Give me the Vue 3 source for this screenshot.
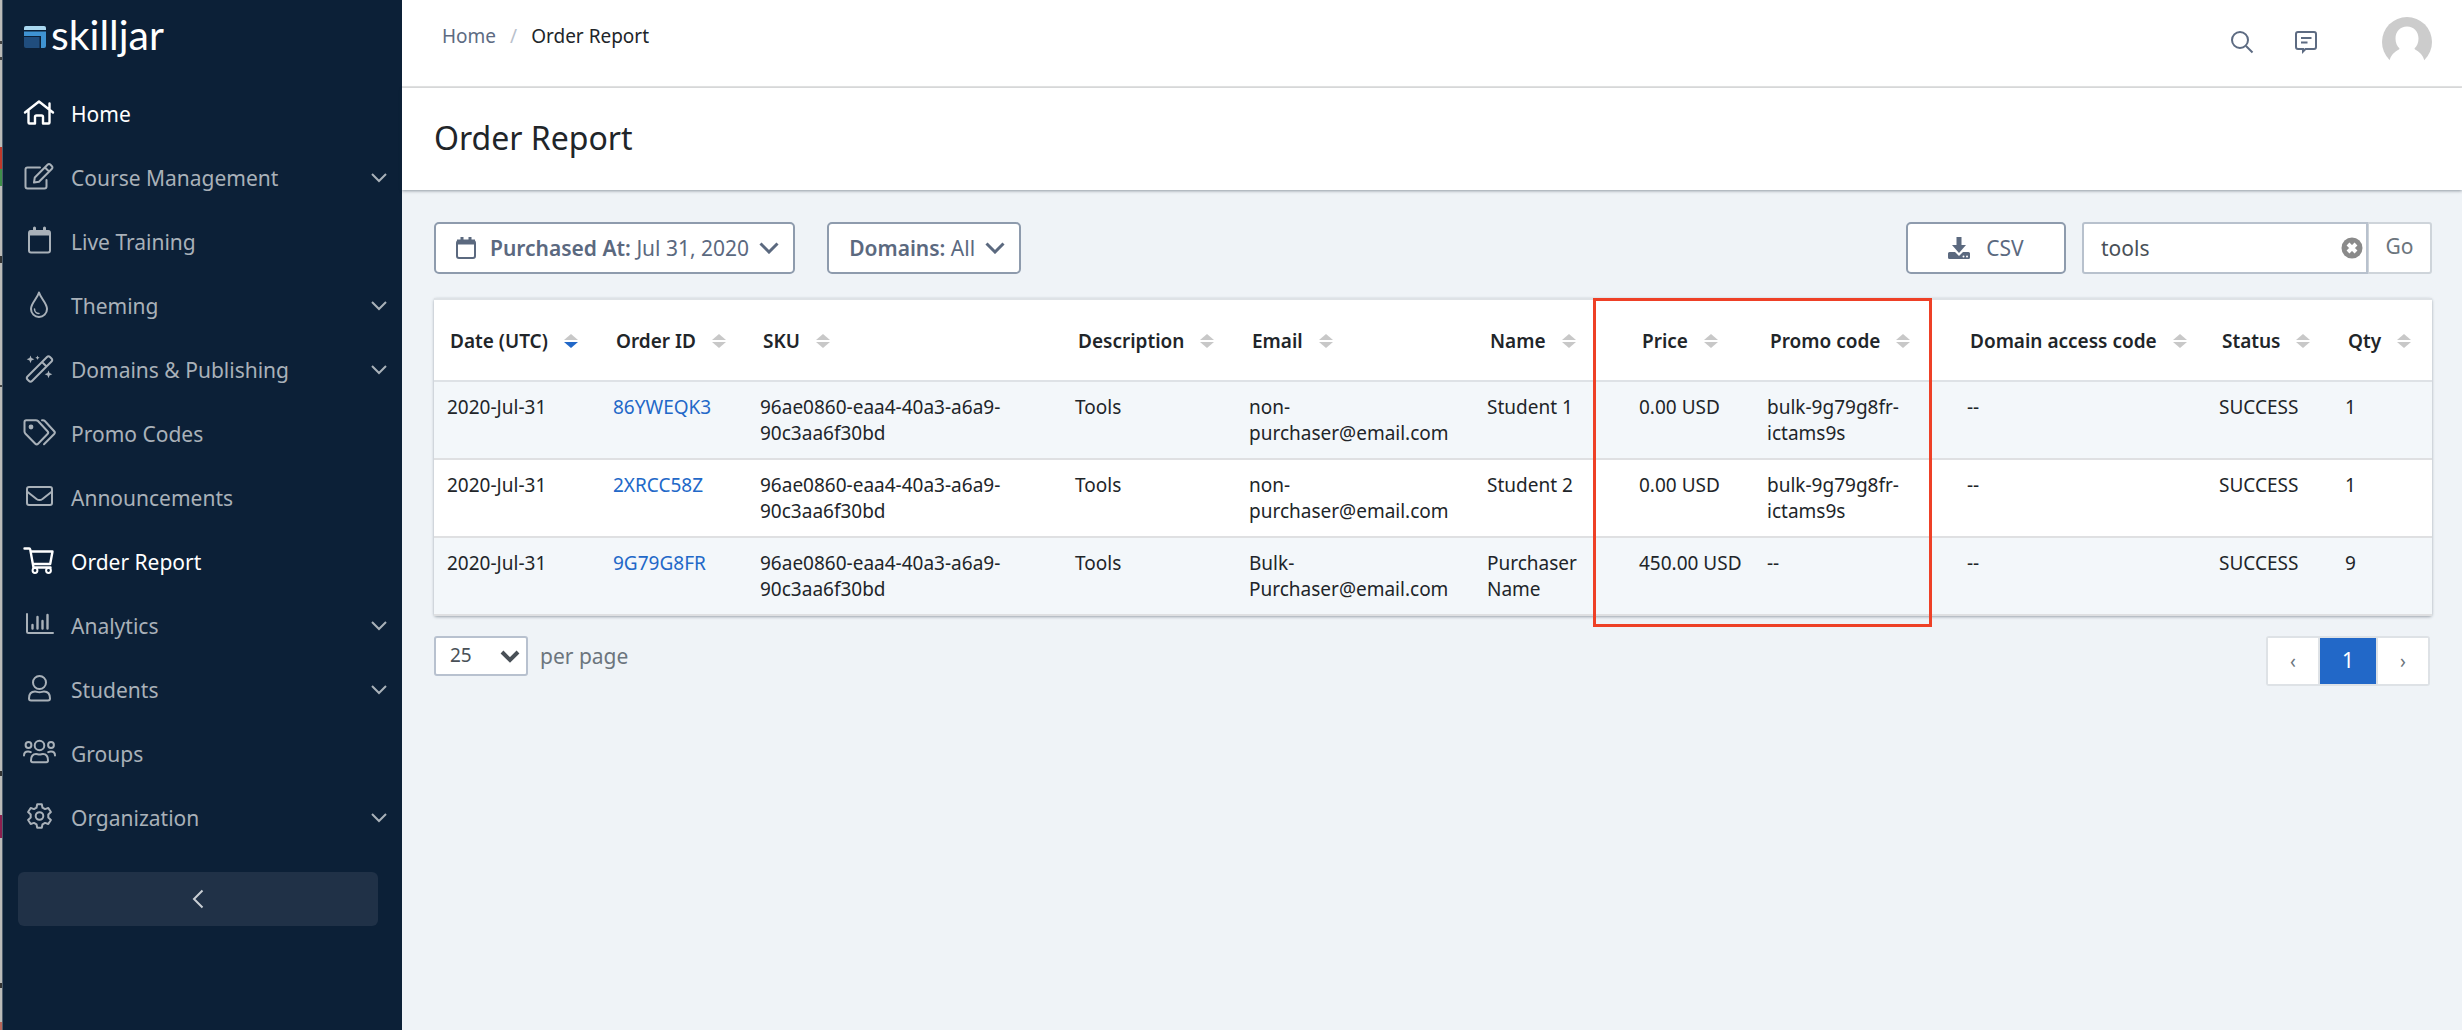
<script setup>
import { ref } from 'vue'

const nav = [
  { label: 'Home', icon: 'home', active: true },
  { label: 'Course Management', icon: 'edit', open: true },
  { label: 'Live Training', icon: 'calendar' },
  { label: 'Theming', icon: 'drop', open: true },
  { label: 'Domains & Publishing', icon: 'wand', open: true },
  { label: 'Promo Codes', icon: 'tags' },
  { label: 'Announcements', icon: 'mail' },
  { label: 'Order Report', icon: 'cart', active: true },
  { label: 'Analytics', icon: 'chart', open: true },
  { label: 'Students', icon: 'user', open: true },
  { label: 'Groups', icon: 'group' },
  { label: 'Organization', icon: 'gear', open: true }
]

const icons = {
  home: '<path d="M4 15.5 18 4.5l14 11M7.500 13v12.500q0 1 1 1H14v-6.500q0-1.500 1.500-1.500h5q1.500 0 1.500 1.500v6.500h5.500q1 0 1-1V13M28.500 12V6.500" stroke-width="2.400"/>',
  edit: '<path d="M19 6.500H6.500Q4.500 6.500 4.500 8.500v17q0 2 2 2h17q2 0 2-2V19M13 21.500l.8-5L26.500 3.800q1.500-1.500 3 0l1.200 1.200q1.500 1.500 0 3L18 20.700zM24 6.500l4 4"/>',
  calendar: '<rect x="8" y="6" width="21" height="21.500" rx="2"/><path d="M8.500 8h20" stroke-width="5" stroke-linecap="butt"/><path d="M13.500 3v4M23.500 3v4" stroke-width="3"/>',
  drop: '<path d="M18 3.500C16 10 10 14 10 20a8 8 0 0 0 16 0c0-6-6-10-8-16.500z"/><path d="M13.500 20a4.500 4.500 0 0 0 4.500 4.500" stroke-width="1.500"/>',
  wand: '<path d="M6.500 23.500 26 4q1.500-1.500 3 0l1.500 1.500q1.500 1.500 0 3L11 28q-1.500 1.500-3 0l-1.500-1.500q-1.500-1.500 0-3zM21 9l4.500 4.500"/><path class="solid" d="m9.500 2.500 1 2.500 2.800 1.200-2.800 1.200-1 2.800-1-2.800-2.800-1.200 2.800-1.200zM16.500 2.500l.6 1.500 1.500.7-1.500.7-.6 1.500-.6-1.500-1.500-.7 1.500-.7zM27.500 17.500l1 2.500 2.800 1.200-2.800 1.200-1 2.800-1-2.800-2.800-1.200 2.800-1.200z"/>',
  tags: '<path d="M3.500 5v9.500q0 1.200 1 2.200l9.800 10q1.400 1.400 2.800 0L26.500 17q1.400-1.400 0-2.800L17 4q-.8-.8-2.200-.8H5.300Q3.500 3.200 3.500 5zM21 3.200h1q1 0 1.800.8l9.400 10.200q1.300 1.400 0 2.800L23 27.300"/><circle class="solid" cx="10" cy="10" r="2.400"/>',
  mail: '<rect x="6" y="6" width="25" height="18" rx="2"/><path d="m6 10.500 9.500 7.500q3 2.200 6 0l9.500-7.500"/>',
  cart: '<path d="M3.500 3.500h4.800q.7 0 .9.900L12.500 22.500h17M9.700 6.500h21.800l-2.300 12.500H12" stroke-width="2.400"/><circle cx="14" cy="25.500" r="2.400"/><circle cx="27.500" cy="25.500" r="2.400"/>',
  chart: '<path d="M6 5v17.500q0 1.500 1.500 1.500H32"/><path d="M11.500 16v3.500M16.500 8v11.500M21.500 12v7.500M26.500 6v13.500" stroke-width="2.400"/>',
  user: '<circle cx="18.500" cy="9.500" r="6.500"/><path d="M8 25.500c0-5 2.500-7 6-7 1.500 0 2.500.8 4.500.8s3-.8 4.500-.8c3.500 0 6 2 6 7 0 1.200-.6 2-2 2H10c-1.400 0-2-.8-2-2z"/>',
  group: '<circle cx="18.500" cy="8.500" r="4.800"/><path d="M10 23.500c0-4.500 2-6.500 5-6.500 1.200 0 2 .6 3.500.6s2.300-.6 3.500-.6c3 0 5 2 5 6.500 0 1-.6 1.800-1.800 1.800H11.800c-1.200 0-1.800-.8-1.800-1.800zM3 18.500c0-2.500 1.300-4 4-4 1.200 0 2 .2 2.800.6M34 18.500c0-2.500-1.300-4-4-4-1.200 0-2 .2-2.800.6"/><circle cx="7.500" cy="8" r="2.900"/><circle cx="30" cy="8" r="2.900"/>',
  gear: '<circle cx="18.500" cy="15" r="3.800"/><path d="M16.200 3.300h4.600l.7 3.400 2.500 1.400 3.300-1.100 2.600 4-2.600 2.400v3.200l2.600 2.400-2.600 4-3.300-1.100-2.500 1.400-.7 3.400h-4.600l-.7-3.400-2.500-1.400-3.300 1.100-2.600-4 2.600-2.400v-3.200L7.100 11l2.600-4L13 8.100l2.500-1.400z"/>'
}

const columns = [
  { label: 'Date (UTC)', width: 166, sorted: true },
  { label: 'Order ID', width: 147 },
  { label: 'SKU', width: 315 },
  { label: 'Description', width: 174 },
  { label: 'Email', width: 238 },
  { label: 'Name', width: 152 },
  { label: 'Price', width: 128 },
  { label: 'Promo code', width: 200 },
  { label: 'Domain access code', width: 252 },
  { label: 'Status', width: 126 },
  { label: 'Qty', width: 100 }
]

const sku = '96ae0860-eaa4-40a3-a6a9-90c3aa6f30bd'
const orders = [
  { id: '86YWEQK3', email: 'non-purchaser@email.com', name: 'Student 1', price: '0.00 USD', promo: 'bulk-9g79g8fr-ictams9s', qty: 1 },
  { id: '2XRCC58Z', email: 'non-purchaser@email.com', name: 'Student 2', price: '0.00 USD', promo: 'bulk-9g79g8fr-ictams9s', qty: 1 },
  { id: '9G79G8FR', email: 'Bulk-Purchaser@email.com', name: 'Purchaser Name', price: '450.00 USD', promo: '--', qty: 9 }
]

const query = ref('tools')
const pageSize = ref('25')
</script>

<template>
  <div class="app">
    <div class="edge"></div>
    <aside class="sidebar">
      <a class="logo" href="#">
        <svg width="24" height="24" viewBox="0 0 24 24" aria-hidden="true">
          <path d="M1 5V3q0-2 2-2h18q2 0 2 2v2z" fill="#a9d8f0" />
          <path d="M1 6.500h22V21q0 2-2 2h-3V11H1z" fill="#3f93d2" />
          <path d="M1 12h15.500v11H3q-2 0-2-2z" fill="#204d7d" />
        </svg>
        <span>skilljar</span>
      </a>
      <nav>
        <a v-for="item in nav" :key="item.label" href="#" class="nav-item" :class="{ active: item.active }">
          <svg class="nav-icon" width="36" height="30" viewBox="0 0 36 30" aria-hidden="true" v-html="icons[item.icon]"></svg>
          <span class="nav-label">{{ item.label }}</span>
          <svg v-if="item.open" class="caret" width="16" height="10" viewBox="0 0 16 10" aria-hidden="true">
            <path d="m1 1 7 7 7-7" />
          </svg>
        </a>
      </nav>
      <button class="collapse" type="button" aria-label="Collapse menu">
        <svg width="12" height="20" viewBox="0 0 12 20" aria-hidden="true"><path d="m10.500 1.500-8.500 8.500 8.500 8.500" /></svg>
      </button>
    </aside>

    <div class="main">
      <header class="topbar">
        <nav class="crumbs" aria-label="Breadcrumb">
          <a href="#">Home</a><span class="slash">/</span><span>Order Report</span>
        </nav>
        <div class="tools">
          <button type="button" class="icon-button" aria-label="Search">
            <svg width="24" height="24" viewBox="0 0 24 24"><circle cx="10" cy="10" r="8" /><path d="m16 16 6.500 6.500" /></svg>
          </button>
          <button type="button" class="icon-button" aria-label="Messages">
            <svg width="24" height="24" viewBox="0 0 24 24"><path d="M4 2h16q2 0 2 2v13q0 2-2 2h-8.500L9 21.500V19H4q-2 0-2-2V4q0-2 2-2zM7 8h10.500M7 12.500h6.500" /></svg>
          </button>
          <button type="button" class="avatar" aria-label="Account">
            <svg width="50" height="50" viewBox="0 0 50 50">
              <circle cx="25" cy="25" r="25" fill="#cccccc" />
              <path d="M25 9.500c7 0 11.500 5 11.500 12 0 4.500-1.500 7.500-4 10 0 2 8 2.500 10.500 14V50H7v-4.500c2.500-11.500 10.500-12 10.500-14-2.500-2.500-4-5.500-4-10 0-7 4.500-12 11.500-12z" fill="#fff" />
            </svg>
          </button>
        </div>
      </header>

      <div class="title">
        <h1>Order Report</h1>
      </div>

      <main class="content">
        <div class="filters">
          <button type="button" class="filter">
            <svg class="filter-cal" width="20" height="24" viewBox="0 0 20 24" aria-hidden="true">
              <rect x="1" y="5" width="18" height="17" rx="2" /><path d="M1 6h18" stroke-width="5" /><path d="M6 1v4M14 1v4" stroke-width="3" />
            </svg>
            <span><strong>Purchased At:</strong> Jul 31, 2020</span>
            <svg class="down" width="20" height="12" viewBox="0 0 20 12" aria-hidden="true"><path d="m1.500 1.500 8.500 8.500 8.500-8.500" /></svg>
          </button>
          <button type="button" class="filter">
            <span><strong>Domains:</strong> All</span>
            <svg class="down" width="20" height="12" viewBox="0 0 20 12" aria-hidden="true"><path d="m1.500 1.500 8.500 8.500 8.500-8.500" /></svg>
          </button>
          <button type="button" class="csv">
            <svg width="22" height="22" viewBox="0 0 22 22" aria-hidden="true">
              <path d="M8.500 0h5v8h4.500l-7 8-7-8h4.500zM1.500 15H7l4 4 4-4h5.500q1.500 0 1.500 1.500v4q0 1.500-1.500 1.500h-19Q0 22 0 20.500v-4Q0 15 1.500 15z" />
              <circle cx="15.500" cy="19.500" r="1" fill="#fff" /><circle cx="19" cy="19.500" r="1" fill="#fff" />
            </svg>
            <span>CSV</span>
          </button>
          <form class="search" @submit.prevent>
            <div class="field">
              <input v-model="query" type="text" aria-label="Search orders" />
              <button type="button" class="clear" aria-label="Clear search" @click="query = ''">
                <svg width="22" height="22" viewBox="0 0 22 22"><circle cx="11" cy="11" r="10.500" /><path d="m7 7 8 8M15 7l-8 8" /></svg>
              </button>
            </div>
            <button type="submit" class="go">Go</button>
          </form>
        </div>

        <div class="table-wrap">
          <table>
            <colgroup>
              <col v-for="c in columns" :key="c.label" :style="{ width: c.width + 'px' }" />
            </colgroup>
            <thead>
              <tr>
                <th v-for="c in columns" :key="c.label" scope="col">
                  <span class="head" :class="{ sorted: c.sorted }">
                    {{ c.label }}
                    <svg width="14" height="14" viewBox="0 0 14 14" aria-hidden="true">
                      <path class="up" d="M7 0l7 6H0z" /><path class="dn" d="M7 14l7-6H0z" />
                    </svg>
                  </span>
                </th>
              </tr>
            </thead>
            <tbody>
              <tr v-for="o in orders" :key="o.id">
                <td>2020-Jul-31</td>
                <td><a href="#">{{ o.id }}</a></td>
                <td>{{ sku }}</td>
                <td>Tools</td>
                <td>{{ o.email }}</td>
                <td>{{ o.name }}</td>
                <td class="nowrap">{{ o.price }}</td>
                <td>{{ o.promo }}</td>
                <td>--</td>
                <td>SUCCESS</td>
                <td>{{ o.qty }}</td>
              </tr>
            </tbody>
          </table>
          <div class="highlight"></div>
        </div>

        <div class="footer">
          <label class="page-size">
            <span class="select">
              <select v-model="pageSize">
                <option>25</option>
                <option>50</option>
                <option>100</option>
              </select>
              <svg width="20" height="14" viewBox="0 0 20 14" aria-hidden="true"><path d="m2 3 8 8 8-8" /></svg>
            </span>
            per page
          </label>
          <nav class="pager" aria-label="Pages">
            <a href="#" aria-label="Previous">‹</a>
            <a href="#" class="current" aria-current="page">1</a>
            <a href="#" aria-label="Next">›</a>
          </nav>
        </div>
      </main>
    </div>
  </div>
</template>

<style>
body {
  margin: 0;
  background: #eff3f7;
}
</style>

<style scoped>
.app {
  display: flex;
  min-height: 100vh;
  font-family: "Noto Sans", "Open Sans", sans-serif;
  font-size: 19px;
  line-height: 26px;
  color: #212529;
}
.app *, .app *::before {
  box-sizing: border-box;
}
button, input, select {
  font: inherit;
  color: inherit;
  margin: 0;
  padding: 0;
  border: 0;
  background: none;
}
a {
  text-decoration: none;
  color: inherit;
}
svg {
  display: block;
  flex: none;
}

/* window behind, showing along the left side */
.edge {
  flex: none;
  width: 3px;
  border-right: 1px solid #4e5d6c;
  background: linear-gradient(#bcbcb9 0 41px, #444 41px 44px, #bcbcb9 44px 57px, #444 57px 60px, #bcbcb9 60px 147px, #c0392b 147px 169px, #3f8f4a 169px 186px, #bcbcb9 186px 256px, #333 256px 263px, #bcbcb9 263px 385px, #444 385px 387px, #bcbcb9 387px 771px, #333 771px 776px, #bcbcb9 776px 815px, #8e1f4f 815px 838px, #bcbcb9 838px 983px, #333 983px 988px, #bcbcb9 988px 1022px, #b8665a 1022px);
}
.sidebar {
  flex: none;
  width: 399px;
  background: #0c2037;
  color: #a9b1b9;
}
.logo {
  display: flex;
  align-items: center;
  gap: 4px;
  height: 82px;
  padding: 0 0 8px 20px;
  color: #fff;
  font-family: Lato, sans-serif;
  font-size: 41px;
  line-height: 48px;
}
.logo span {
  padding-bottom: 4px;
}
.nav-item {
  display: flex;
  align-items: center;
  gap: 14px;
  height: 64px;
  padding: 0 15px 0 18px;
  font-size: 21px;
  line-height: 30px;
}
.nav-item.active {
  color: #fff;
}
.nav-icon {
  margin-bottom: 4px;
  fill: none;
  stroke: currentColor;
  stroke-width: 2;
  stroke-linejoin: round;
  stroke-linecap: round;
}
.nav-icon :deep(.solid) {
  fill: currentColor;
  stroke: none;
}
.nav-label {
  flex: 1;
}
.caret, .collapse svg {
  fill: none;
  stroke: currentColor;
  stroke-width: 2;
}
.collapse {
  display: flex;
  align-items: center;
  justify-content: center;
  width: 360px;
  height: 54px;
  margin: 22px 0 0 15px;
  border-radius: 6px;
  background: #203147;
  color: #c9ced4;
}

.main {
  flex: 1;
  min-width: 0;
}
.topbar {
  display: flex;
  justify-content: space-between;
  height: 88px;
  padding: 0 30px 0 40px;
  border-bottom: 2px solid #e5e5e5;
  background: #fff;
}
.crumbs {
  display: flex;
  gap: 14px;
  padding-top: 23px;
}
.crumbs a {
  color: #5d6b82;
}
.slash {
  color: #b9c1cc;
}
.tools {
  display: flex;
  align-items: center;
  height: 84px;
}
.icon-button {
  margin-right: 40px;
  color: #5d6b82;
}
.icon-button svg {
  fill: none;
  stroke: currentColor;
  stroke-width: 2;
}
.avatar {
  margin-left: 24px;
}
.title {
  position: relative;
  height: 102px;
  padding: 29px 32px;
  background: #fff;
  box-shadow: 0 1px 3px rgba(30, 45, 60, 0.45);
}
h1 {
  margin: 0;
  font-size: 32px;
  line-height: 42px;
  font-weight: 400;
}
.content {
  padding: 32px 30px 32px 32px;
}
.filters {
  display: flex;
  margin-bottom: 24px;
  font-size: 21px;
  line-height: 30px;
  color: #5b697f;
}
.filters strong {
  font-weight: 600;
}
.filter, .csv {
  display: flex;
  align-items: center;
  height: 52px;
  border: 2px solid #8e9bad;
  border-radius: 5px;
  background: #fff;
}
.filter {
  gap: 10px;
  margin-right: 32px;
  padding: 0 14px 0 20px;
}
.filter-cal {
  margin-right: 4px;
}
.filter svg {
  fill: none;
  stroke: currentColor;
  stroke-width: 2;
}
.filter .down {
  stroke-width: 3;
}
.csv {
  justify-content: center;
  gap: 16px;
  width: 160px;
  margin: 0 16px 0 auto;
}
.csv svg {
  fill: currentColor;
}
.search {
  display: flex;
}
.field {
  position: relative;
}
.field input {
  display: block;
  width: 286px;
  height: 52px;
  padding: 0 40px 0 17px;
  border: 2px solid #b8c1cd;
  border-radius: 3px 0 0 3px;
  background: #fff;
  color: #495057;
}
.clear {
  position: absolute;
  top: 15px;
  right: 5px;
}
.clear circle {
  fill: #8a8a8a;
}
.clear path {
  stroke: #fff;
  stroke-width: 4;
}
.go {
  width: 64px;
  height: 52px;
  padding-bottom: 4px;
  border: 2px solid #ced4da;
  border-left-width: 1px;
  border-radius: 0 3px 3px 0;
  background: #fff;
  color: #6c757d;
}

.table-wrap {
  position: relative;
  border-radius: 3px;
  box-shadow: 0 1px 3px rgba(30, 45, 60, 0.4);
}
table {
  width: 100%;
  table-layout: fixed;
  border-spacing: 0;
  background: #fff;
}
th, td {
  text-align: left;
  vertical-align: top;
}
th {
  height: 84px;
  padding: 2px 0 0 16px;
  border-top: 2px solid #dee2e6;
  border-bottom: 2px solid #dee2e6;
  vertical-align: middle;
  font-weight: 600;
  white-space: nowrap;
}
td {
  padding: 12px 13px;
  border-bottom: 2px solid #dfe0e2;
}
.nowrap {
  padding-right: 0;
  white-space: nowrap;
}
tbody tr:nth-child(odd) {
  background: #f3f7fa;
}
td a {
  color: #2268c8;
}
.head {
  display: flex;
  align-items: center;
  gap: 16px;
}
.head svg {
  fill: #c8c8c8;
}
.sorted .dn {
  fill: #2268c8;
}
.highlight {
  position: absolute;
  top: 0;
  bottom: -11px;
  left: 58%;
  width: 17%;
  border: 3px solid #ee4026;
  pointer-events: none;
}

.footer {
  display: flex;
  justify-content: space-between;
  align-items: flex-start;
  padding: 20px 2px 0 0;
}
.page-size {
  display: flex;
  align-items: center;
  gap: 12px;
  font-size: 21px;
  color: #6c757d;
}
.select {
  position: relative;
}
.select select {
  appearance: none;
  display: block;
  width: 94px;
  height: 40px;
  padding: 0 14px 2px;
  border: 2px solid #b8c1cf;
  border-radius: 3px;
  background: #fff;
  color: #495057;
  font-size: 19px;
}
.select svg {
  position: absolute;
  top: 13px;
  right: 8px;
  fill: none;
  stroke: #495057;
  stroke-width: 4;
  pointer-events: none;
}
.pager {
  display: flex;
  border: 2px solid #dee2e6;
  border-radius: 3px;
}
.pager a {
  width: 50px;
  height: 46px;
  background: #fff;
  color: #6c757d;
  line-height: 46px;
  text-align: center;
}
.pager .current {
  box-sizing: content-box;
  width: 56px;
  border: solid #dee2e6;
  border-width: 0 2px;
  background: #2268c8;
  color: #fff;
  font-size: 21px;
  line-height: 44px;
}
</style>
